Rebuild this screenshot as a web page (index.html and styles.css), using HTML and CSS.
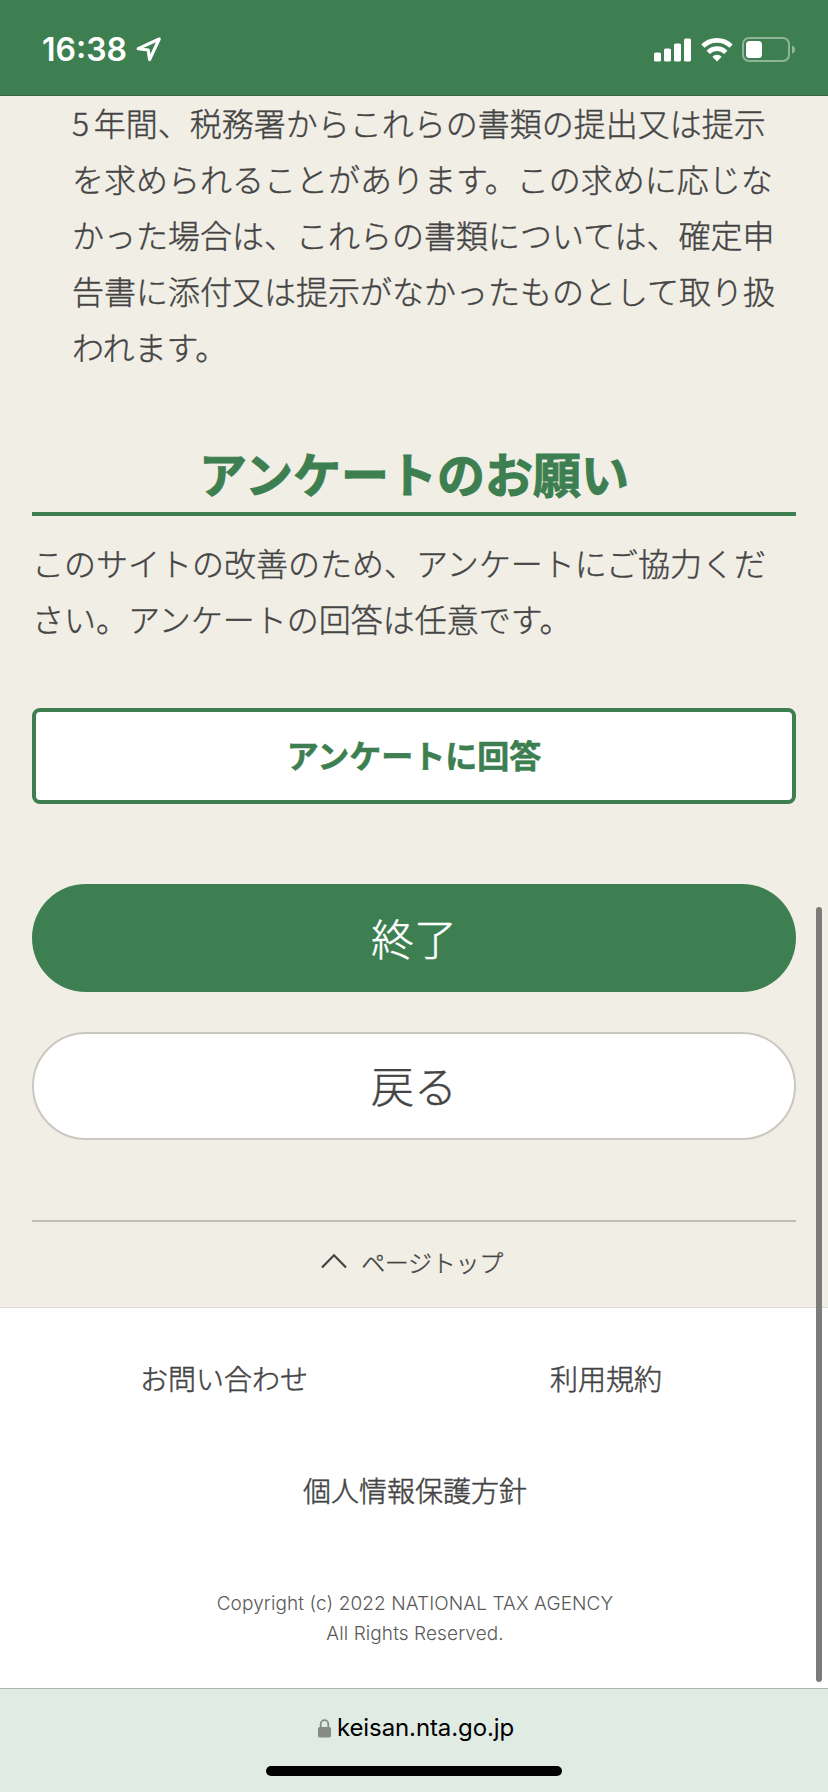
FILE: index.html
```html
<!DOCTYPE html>
<html lang="ja">
<head>
<meta charset="utf-8">
<title>アンケートのお願い</title>
<link rel="stylesheet" href="styles.css">
</head>
<body>
<div class="screen">
  <header class="status">
    <div class="status-left">
      <span class="clock">16:38</span>
      <svg class="locate" width="26" height="26" viewBox="0 0 26 26"><path d="M23.2 2 L2.2 11.6 L12.2 13 L13.6 22.6 Z" fill="none" stroke="#fff" stroke-width="3.2" stroke-linejoin="round"/></svg>
    </div>
    <div class="status-right">
      <svg width="38" height="24" viewBox="0 0 38 24" fill="#fff"><rect x="0" y="14.5" width="7" height="9" rx="1.6"/><rect x="10" y="10.5" width="7" height="13" rx="1.6"/><rect x="20" y="5.5" width="7" height="18" rx="1.6"/><rect x="30" y="0.5" width="7" height="23" rx="1.6"/></svg>
      <svg width="32" height="24" viewBox="0 0 32 24" fill="none" stroke="#fff" stroke-width="4.6"><path d="M1.9 8.2 A20 20 0 0 1 30.1 8.2"/><path d="M7.2 14.3 A12.3 12.3 0 0 1 24.8 14.3"/><path d="M16 23.4 L11.3 18.7 A6.8 6.8 0 0 1 20.7 18.7 Z" fill="#fff" stroke="none"/></svg>
      <svg width="53" height="25" viewBox="0 0 53 25"><rect x="1" y="1" width="46" height="23" rx="6" fill="none" stroke="#fff" stroke-opacity=".42" stroke-width="2"/><rect x="4" y="4" width="16" height="17" rx="3.5" fill="#fff"/><path d="M50 8.5 Q53 9.5 53 12.5 Q53 15.500 50 16.500 Z" fill="#fff" fill-opacity=".45"/></svg>
    </div>
  </header>

  <main class="content">
    <p class="note"><span class="digit">5</span>年間、税務署からこれらの書類の提出又は提示<br>を求められることがあります。この求めに応じな<br>かった場合は、これらの書類については、確定申<br>告書に添付又は提示がなかったものとして取り扱<br>われます。</p>
    <h2 class="heading">アンケートのお願い</h2>
    <p class="lead">このサイトの改善のため、アンケートにご協力くだ<br>さい。アンケートの回答は任意です。</p>
    <a class="survey">アンケートに回答</a>
    <a class="pill pill-primary">終了</a>
    <a class="pill pill-secondary">戻る</a>
    <a class="pagetop"><svg width="28" height="16" viewBox="0 0 28 16"><path d="M2 14.500 L14 2.300 L26 14.500" fill="none" stroke="#444" stroke-width="2.300"/></svg><span>ページトップ</span></a>
  </main>

  <footer class="footer">
    <nav class="links">
      <a>お問い合わせ</a>
      <a>利用規約</a>
      <a class="wide">個人情報保護方針</a>
    </nav>
    <p class="copyright">Copyright (c) 2022 NATIONAL TAX AGENCY<br>All Rights Reserved.</p>
  </footer>

  <div class="urlbar">
    <div class="url">
      <svg width="13" height="19" viewBox="0 0 13 19"><path d="M2.700 9 V5.200 A3.800 4 0 0 1 10.300 5.200 V9" fill="none" stroke="#868b86" stroke-width="1.800"/><rect x="0" y="8" width="13" height="10.500" rx="1.800" fill="#868b86"/></svg>
      <span>keisan.nta.go.jp</span>
    </div>
    <div class="home"></div>
  </div>
  <div class="scrollbar"></div>
</div>
</body>
</html>
```
FILE: styles.css
```css
* { box-sizing: border-box; }
body, p, h2 { margin: 0; }
body { background: #f1eee6; }
.screen {
  position: relative;
  display: flex;
  flex-direction: column;
  width: 828px;
  height: 1792px;
  overflow: hidden;
  color: #444;
  background: #f1eee6;
  font-family: "Noto Sans CJK JP", sans-serif;
  font-weight: 300;
  -webkit-text-stroke-width: 0.4px;
}
.status {
  flex: none;
  display: flex;
  justify-content: space-between;
  align-items: center;
  height: 96px;
  padding: 4px 33px 0 42px;
  background: #3d7f50;
  border-bottom: 1px solid #3c5f45;
}
.status-left { display: flex; align-items: center; gap: 8px; }
.clock {
  width: 86px;
  color: #fff;
  font: 600 32px/40px Inter, sans-serif;
  -webkit-text-stroke-width: 0;
  white-space: nowrap;
}
.status-right { display: flex; align-items: center; gap: 9px; }
.content {
  flex: none;
  display: flex;
  flex-direction: column;
  height: 1212px;
  padding: 0 32px;
  border-bottom: 1px solid #dbdad2;
}
.note, .lead { font-size: 32px; line-height: 56px; white-space: nowrap; }
.note { margin: -2px 0 0 40px; }
.digit { letter-spacing: 4.5px; }
.heading {
  height: 76px;
  margin-top: 66px;
  color: #3d7f50;
  border-bottom: 4px solid #3d7f50;
  font-size: 48px;
  line-height: 64px;
  font-weight: 700;
  text-align: center;
  -webkit-text-stroke-width: 1px;
}
.lead { margin-top: 18px; }
.survey {
  height: 96px;
  margin-top: 62px;
  border: 4px solid #3d7f50;
  border-radius: 8px;
  background: #fff;
  color: #3d7f50;
  font-size: 32px;
  line-height: 85px;
  font-weight: 700;
  text-align: center;
  -webkit-text-stroke-width: 0.6px;
}
.pill {
  height: 108px;
  border-radius: 54px;
  font-size: 43px;
  text-align: center;
}
.pill-primary { margin-top: 80px; background: #3d7f50; color: #fff; line-height: 107px; }
.pill-secondary { margin-top: 40px; background: #fff; border: 2px solid #cac8c0; line-height: 101px; }
.pagetop {
  display: flex;
  justify-content: center;
  align-items: center;
  gap: 13px;
  height: 86px;
  margin-top: 80px;
  padding-bottom: 6px;
  padding-right: 5px;
  border-top: 2px solid #bfbfb5;
  font-size: 24px;
  letter-spacing: -0.3px;
}
.footer { flex: none; height: 380px; padding: 42px 31px 0 33px; background: #fff; }
.links {
  display: grid;
  grid-template-columns: 1fr 1fr;
  row-gap: 56px;
  font-size: 28px;
  line-height: 56px;
  text-align: center;
  -webkit-text-stroke-width: 0.5px;
}
.wide { grid-column: 1 / 3; }
.copyright {
  margin-top: 71px;
  color: #5a5a58;
  font: 300 19px/30px Inter, sans-serif;
  letter-spacing: 0.1px;
  text-align: center;
  -webkit-text-stroke-width: 0;
}
.urlbar {
  flex: 1;
  display: flex;
  flex-direction: column;
  align-items: center;
  padding-top: 21px;
  background: #dfebe3;
  border-top: 1px solid #b0b5ad;
}
.url {
  display: flex;
  align-items: center;
  gap: 6px;
  height: 36px;
  padding-left: 4px;
  color: #000;
  font: 400 24px/36px Inter, sans-serif;
  letter-spacing: -0.1px;
  -webkit-text-stroke-width: 0;
}
.home { width: 296px; height: 10px; margin-top: 20px; border-radius: 5px; background: #000; }
.scrollbar {
  position: absolute;
  left: 816px;
  top: 907px;
  width: 6px;
  height: 775px;
  border-radius: 3px;
  background: #7b7c77;
}
```
